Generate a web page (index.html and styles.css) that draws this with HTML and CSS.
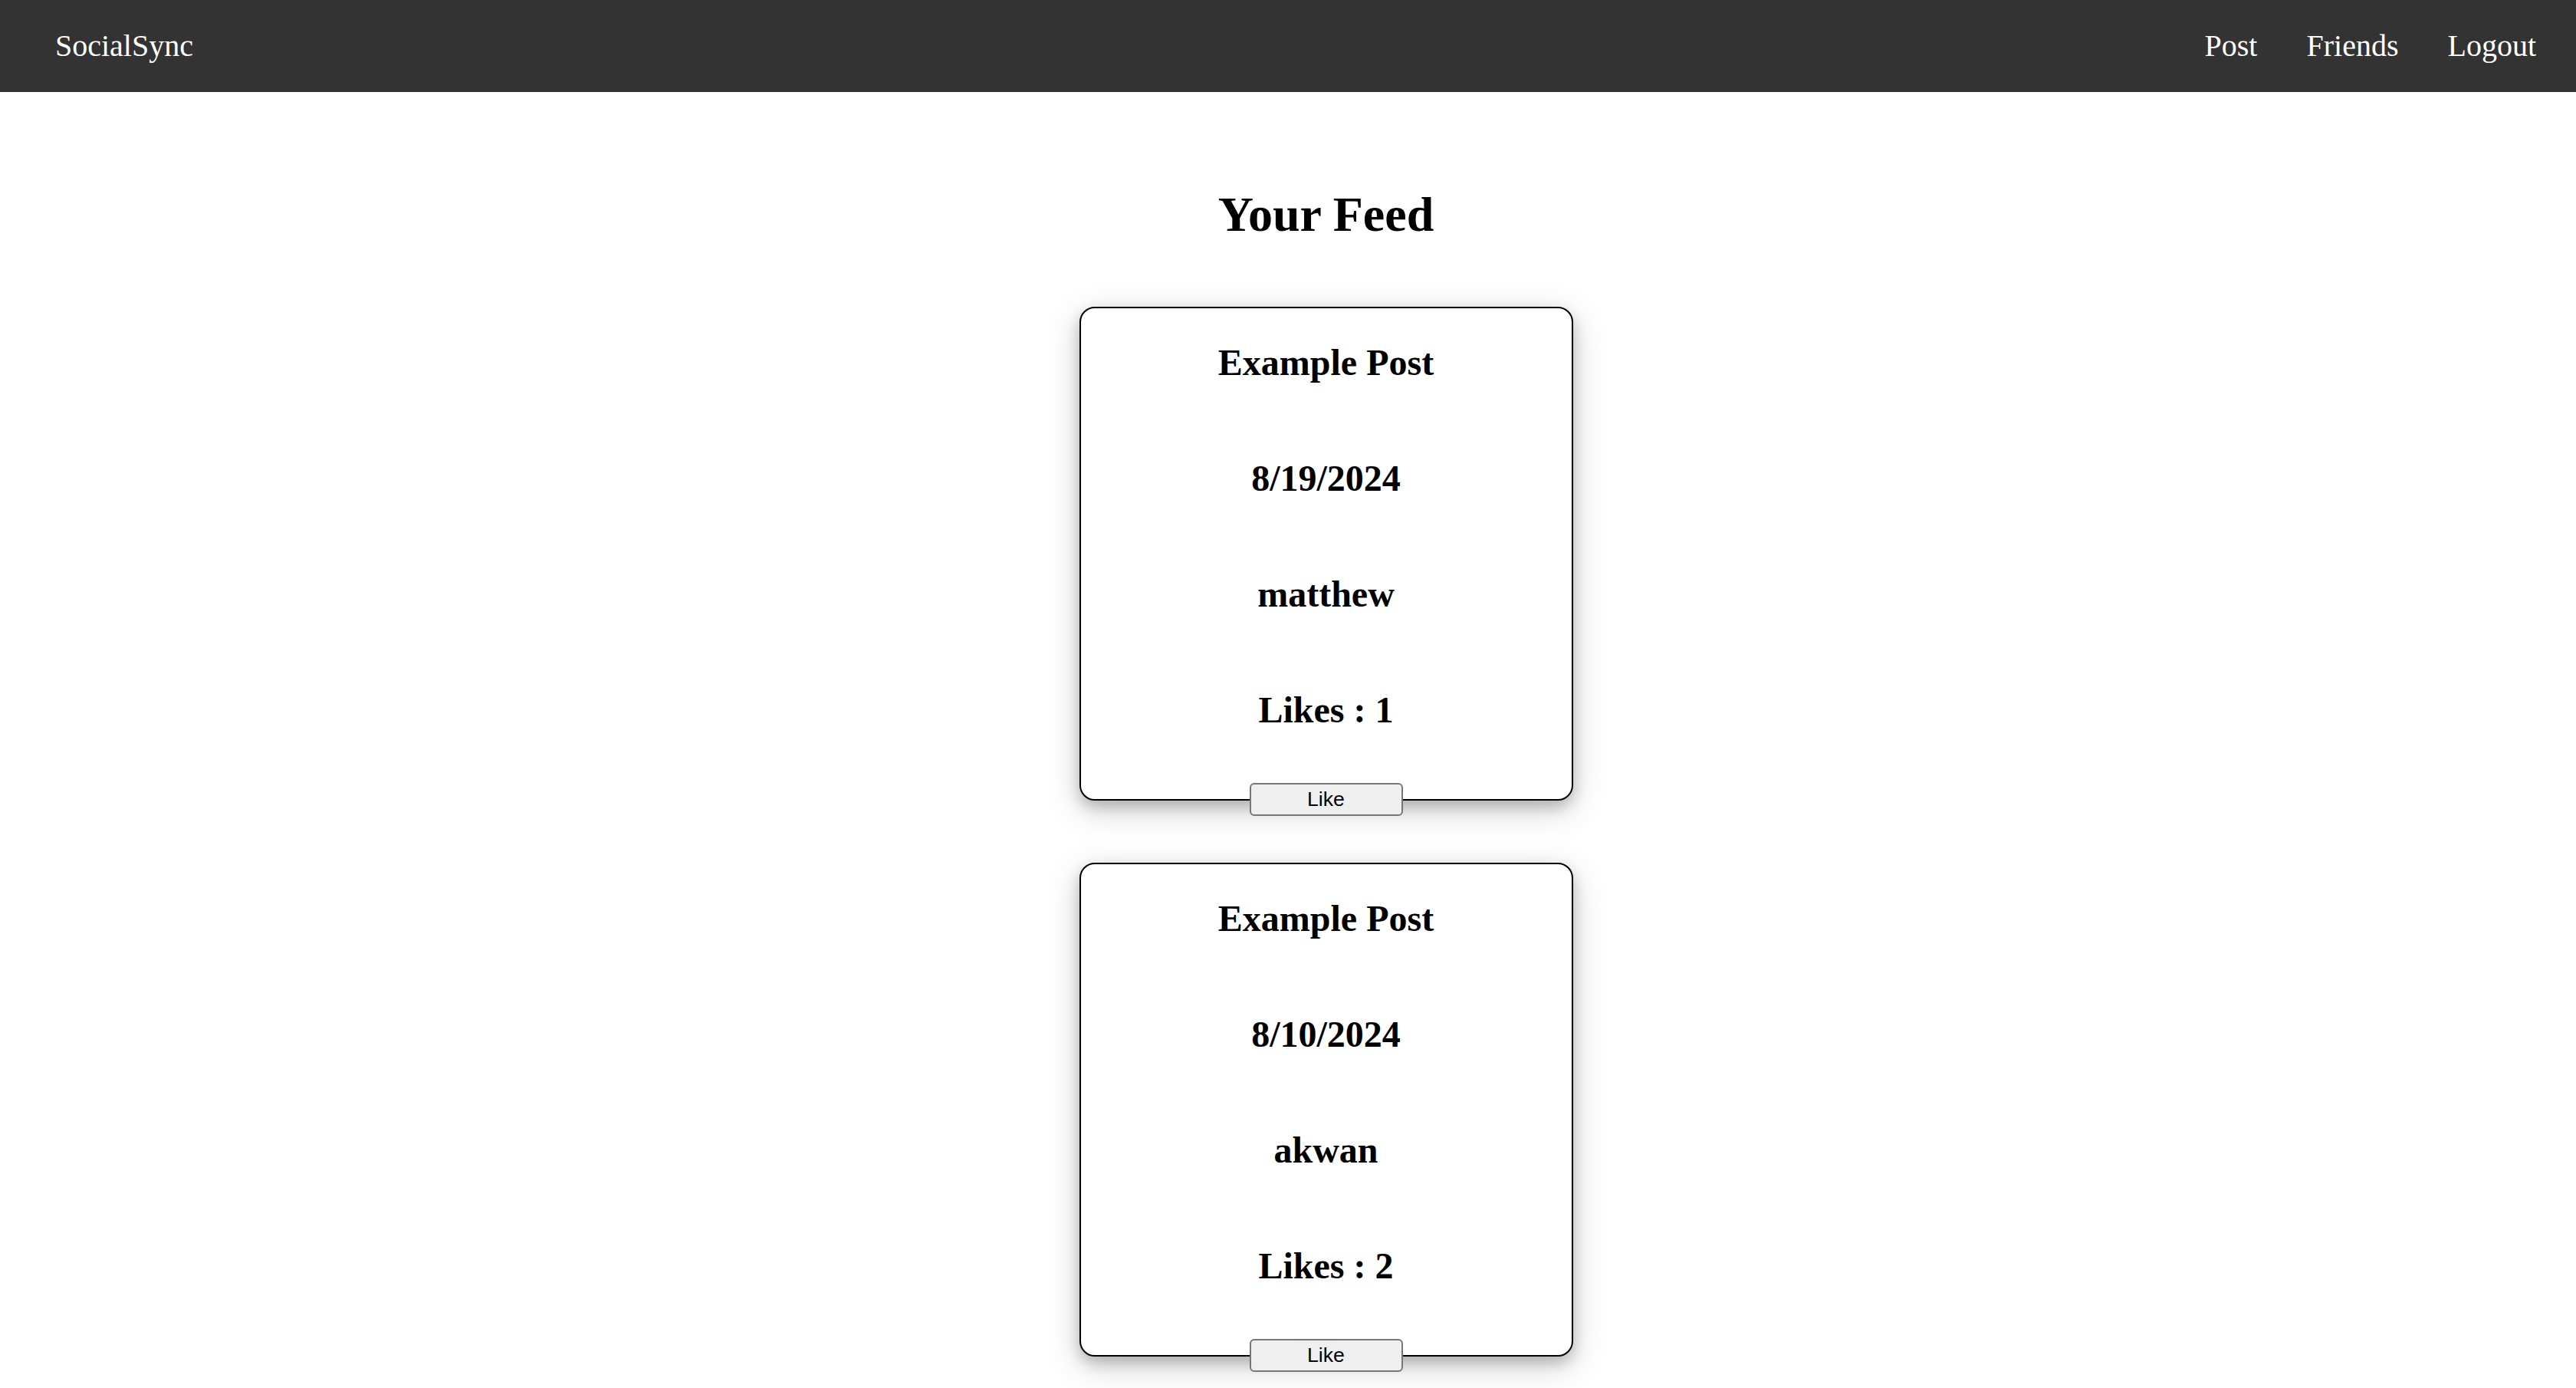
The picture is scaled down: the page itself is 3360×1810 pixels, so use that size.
FILE: index.html
```html
<!DOCTYPE html>
<html lang="en">
<head>
<meta charset="utf-8">
<title>SocialSync</title>
<link rel="stylesheet" href="styles.css">
</head>
<body>
<nav class="navbar">
  <a class="brand" href="#">SocialSync</a>
  <div class="nav-links">
    <a href="#">Post</a>
    <a href="#">Friends</a>
    <a href="#">Logout</a>
  </div>
</nav>
<main class="feed">
  <h1 class="feed-title">Your Feed</h1>
  <div class="card">
    <div class="card-body">
      <h2>Example Post</h2>
      <h2>8/19/2024</h2>
      <h2>matthew</h2>
      <h2>Likes : 1</h2>
    </div>
    <button class="like-btn">Like</button>
  </div>
  <div class="card">
    <div class="card-body">
      <h2>Example Post</h2>
      <h2>8/10/2024</h2>
      <h2>akwan</h2>
      <h2>Likes : 2</h2>
    </div>
    <button class="like-btn">Like</button>
  </div>
</main>
</body>
</html>
```

FILE: styles.css
```css
html, body {
  margin: 0;
  padding: 0;
  background: #ffffff;
}

body {
  font-family: "Liberation Serif", "Times New Roman", serif;
  color: #000;
}

.navbar {
  height: 120px;
  background: #333333;
  display: flex;
  align-items: center;
  justify-content: space-between;
  padding: 0 52px 0 72px;
}

.navbar a {
  color: #ffffff;
  text-decoration: none;
  font-size: 40px;
  line-height: 46px;
}

.nav-links {
  display: flex;
  gap: 64px;
}

.feed {
  display: flex;
  flex-direction: column;
  align-items: center;
  padding: 124px 0 120px 99px;
}

.feed-title {
  margin: 0 0 85px;
  font-size: 64px;
  line-height: 71px;
  font-weight: bold;
}

.card {
  box-sizing: content-box;
  flex-shrink: 0;
  width: 640px;
  height: 640px;
  border: 2px solid #000;
  border-radius: 20px;
  background: #fff;
  box-shadow: 0 8px 18px rgba(0, 0, 0, 0.2), 0 12px 44px rgba(0, 0, 0, 0.19);
  display: flex;
  flex-direction: column;
  align-items: center;
  margin-bottom: 81px;
}

.card-body {
  flex-shrink: 0;
  display: flex;
  flex-direction: column;
  align-items: center;
  gap: 98px;
  padding-top: 44px;
}

.card-body h2 {
  margin: 0;
  font-size: 48px;
  line-height: 53px;
  font-weight: bold;
}

.like-btn {
  flex-shrink: 0;
  margin-top: 69px;
  width: 200px;
  height: 43px;
  background: #efefef;
  border: 2px solid #767676;
  border-radius: 6px;
  font-family: "Liberation Sans", Arial, sans-serif;
  font-size: 26.67px;
  color: #000;
  padding: 0;
}
```
